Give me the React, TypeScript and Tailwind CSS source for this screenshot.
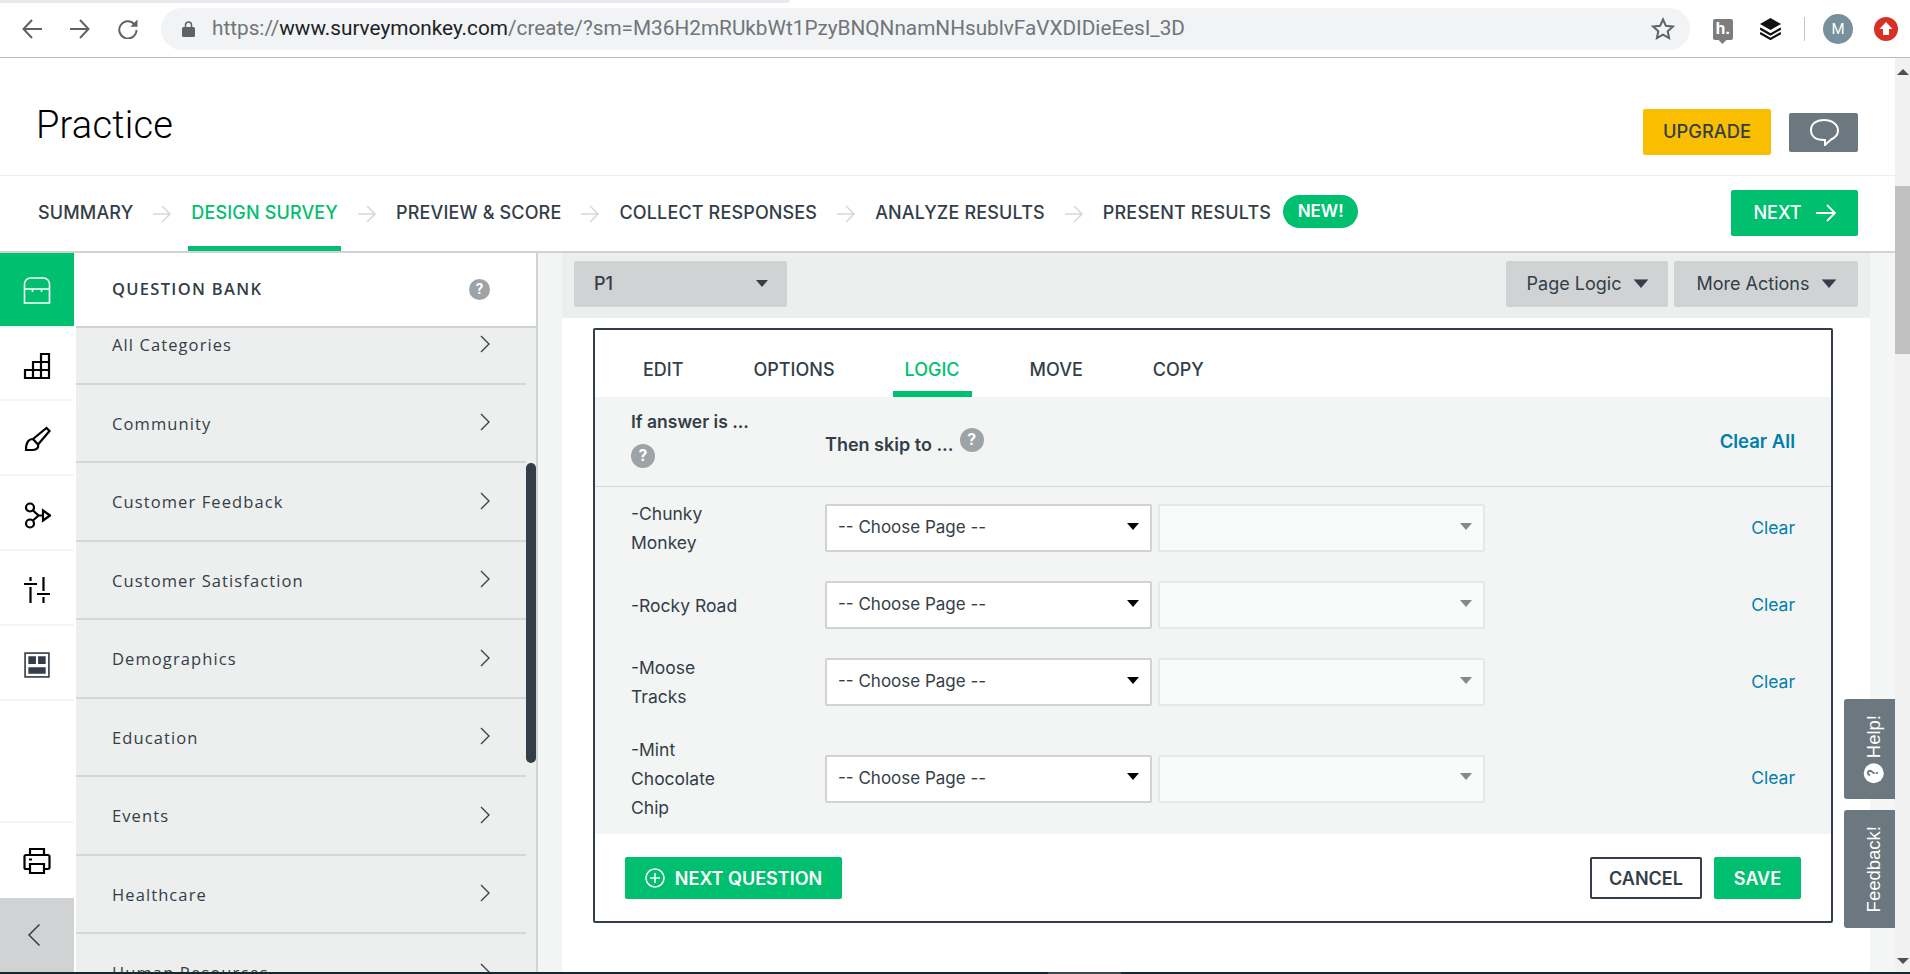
import React from 'react';

const plex = "font-['Inter',sans-serif]";
const roboto = "font-['Roboto',sans-serif]";
const wide = "font-['Open_Sans',sans-serif]";

const navItems = ['SUMMARY', 'DESIGN SURVEY', 'PREVIEW & SCORE', 'COLLECT RESPONSES', 'ANALYZE RESULTS', 'PRESENT RESULTS'];
const categories = ['All Categories', 'Community', 'Customer Feedback', 'Customer Satisfaction', 'Demographics', 'Education', 'Events', 'Healthcare', 'Human Resources'];
const tabs = ['EDIT', 'OPTIONS', 'LOGIC', 'MOVE', 'COPY'];
const answers = [['-Chunky', 'Monkey'], ['-Rocky Road'], ['-Moose', 'Tracks'], ['-Mint', 'Chocolate', 'Chip']];

const Caret = ({ className }: { className: string }) => (
  <svg width="12" height="7" viewBox="0 0 12 7" className={className}>
    <path d="M0 0h12L6 7z" fill="currentColor" />
  </svg>
);

const Question = ({ size = 'w-6 h-6 text-[17px]' }: { size?: string }) => (
  <span className={`${size} ${roboto} inline-flex shrink-0 items-center justify-center rounded-full bg-[#9da3a7] font-bold text-white`}>?</span>
);

const BrowserBar = () => (
  <div className="h-[58px] shrink-0 border-b border-[#b8b8b8] bg-white">
    <div className="h-[3px] w-[790px] rounded-br-lg bg-[#e8eaed]" />
    <div className="flex h-[54px] items-center pb-[2px] pl-[22px]">
      <svg width="20" height="20" viewBox="0 0 20 20" fill="none" stroke="#5f6368" strokeWidth="2"><path d="M20 10H1.500M10 1 1.500 10l8.500 9" /></svg>
      <svg width="20" height="20" viewBox="0 0 20 20" fill="none" stroke="#5f6368" strokeWidth="2" className="ml-7"><path d="M0 10h18.500M10 1l8.500 9-8.500 9" /></svg>
      <svg width="20" height="20" viewBox="0 0 20 20" fill="none" stroke="#5f6368" strokeWidth="2" className="ml-7"><path d="M16.600 5.500A8.600 8.600 0 1 0 18.500 11" /><path d="M19.500 0.500v7.200h-7.200z" fill="#5f6368" stroke="none" /></svg>
      <div className="ml-[23px] flex h-[42px] w-[1529px] items-center rounded-full bg-[#f1f3f4] pl-[21px]">
        <svg width="13" height="16" viewBox="0 0 13 16" fill="#5f6368"><path d="M1.500 6h10A1.500 1.500 0 0 1 13 7.500v7a1.500 1.500 0 0 1-1.500 1.500h-10A1.500 1.500 0 0 1 0 14.500v-7A1.500 1.500 0 0 1 1.500 6z" /><path d="M3.500 6V4a3 3 0 0 1 6 0v2" fill="none" stroke="#5f6368" strokeWidth="1.500" /></svg>
        <span className={`${roboto} ml-[17px] text-[20.750px] text-[#70757a]`}>
          https://<span className="text-[#202124]">www.surveymonkey.com</span>/create/?sm=M36H2mRUkbWt1PzyBNQNnamNHsublvFaVXDIDieEesI_3D
        </span>
        <svg width="24" height="24" viewBox="0 0 24 24" fill="none" stroke="#5f6368" strokeWidth="2" className="ml-auto mr-[15px]"><path d="M12 2.500l2.900 6.300 6.900.8-5.100 4.700 1.400 6.800-6.100-3.400-6.100 3.400 1.400-6.800-5.100-4.700 6.900-.8z" /></svg>
      </div>
      <div className={`${roboto} relative ml-[23px] flex h-[21px] w-[20px] items-center justify-center rounded-[2px] bg-[#7d7d7d] text-[17px] font-bold text-white`}>
        h.
        <span className="absolute -bottom-[3px] left-[7px] h-[5px] w-[5px] rotate-45 bg-[#7d7d7d]" />
      </div>
      <svg width="21" height="22" viewBox="0 0 21 22" className="ml-[27px]"><path d="M10.500 0 21 6l-10.500 6L0 6z" fill="#111" /><path d="M0 10.500l10.500 6 10.500-6M0 15l10.500 6L21 15" fill="none" stroke="#111" strokeWidth="2.200" /></svg>
      <div className="ml-[23px] h-[24px] w-px bg-[#c6c6c6]" />
      <div className={`${roboto} ml-[18px] flex h-[30px] w-[30px] items-center justify-center rounded-full bg-[#78909c] text-[15px] text-white`}>M</div>
      <svg width="24" height="24" viewBox="0 0 24 24" className="ml-[21px]"><circle cx="12" cy="12" r="12" fill="#d93025" /><path d="M12 5l6.500 7H15v6H9v-6H5.500z" fill="#fff" /></svg>
    </div>
  </div>
);

const Header = () => (
  <div className="flex h-[118px] shrink-0 items-center justify-between border-b border-[#eceeee] pt-[31px] pr-[37px] pl-[36px]">
    <h1 className={`${roboto} mb-[14px] text-[38px] leading-none font-light tracking-[0.2px] text-black`}>Practice</h1>
    <div className="flex items-center gap-[18px]">
      <button className={`${plex} h-[46px] w-[128px] rounded-[2px] bg-[#f9be00] text-[18.300px] font-medium text-[#333e48]`}>UPGRADE</button>
      <button className="flex h-[39px] w-[69px] items-center justify-center rounded-[2px] bg-[#6b787f]">
        <svg width="32" height="28" viewBox="0 0 32 28" fill="none" stroke="#fff" strokeWidth="2"><path d="M16 2c8 0 14 4.500 14 10.500 0 4.500-3.500 7.500-7 9L17 27v-5h-1C8 22 3 18.500 3 12 3 6 8 2 16 2z" /></svg>
      </button>
    </div>
  </div>
);

const NavArrow = () => (
  <svg width="20" height="18" viewBox="0 0 20 18" fill="none" stroke="#d6d8d9" strokeWidth="1.500" className="mx-[19px]"><path d="M1 9h17M10 1l8 8-8 8" /></svg>
);

const Nav = () => (
  <div className="flex h-[77px] shrink-0 items-center border-b-2 border-[#d0d2d3] pr-[37px] pl-[38px]">
    {navItems.map((item, i) => (
      <React.Fragment key={item}>
        {i > 0 && <NavArrow />}
        <a className={`${plex} relative flex h-full items-center pb-[2px] text-[18px] font-medium tracking-[0.15px] ${i === 1 ? 'text-[#00bf6f]' : 'text-[#333e48]'}`}>
          {item}
          {i === 1 && <span className="absolute -right-[3px] bottom-0 -left-[3px] h-[5px] bg-[#00bf6f]" />}
        </a>
      </React.Fragment>
    ))}
    <span className={`${plex} ml-[12px] flex h-[33px] w-[75px] -translate-y-[2px] items-center justify-center rounded-full bg-[#00bf6f] text-[17px] font-semibold text-white`}>NEW!</span>
    <button className={`${plex} ml-auto flex h-[46px] w-[127px] -translate-y-[1px] items-center justify-center gap-[14px] rounded-[2px] bg-[#00bf6f] text-[18px] font-medium text-white`}>
      NEXT
      <svg width="20" height="18" viewBox="0 0 20 18" fill="none" stroke="#fff" strokeWidth="1.800"><path d="M0 9h19M11 1l8 8-8 8" /></svg>
    </button>
  </div>
);

const RailCell = ({ children, className = '' }: { children: React.ReactNode; className?: string }) => (
  <div className={`flex h-[75px] shrink-0 items-center justify-center border-b-2 border-[#f4f5f5] ${className}`}>{children}</div>
);

const Rail = () => (
  <div className="flex w-[74px] shrink-0 flex-col bg-white">
    <div className="flex h-[73px] shrink-0 items-center justify-center bg-[#00bf6f]">
      <svg width="28" height="28" viewBox="0 0 28 28" fill="none" stroke="#fff" strokeWidth="1.600"><path d="M1.500 27V8a6 6 0 0 1 6-6h13a6 6 0 0 1 6 6v19zM1.500 13h25M9.500 13v3M18.500 13v3" /></svg>
    </div>
    <RailCell className="border-t-2">
      <svg width="28" height="28" viewBox="0 0 28 28" fill="none" stroke="#000" strokeWidth="2.200" className="translate-y-[2px]"><path d="M2 18h24v8H2zM10 10h16v16H10zM18 2h8v24h-8zM10 18v8M18 18v8" /></svg>
    </RailCell>
    <RailCell>
      <svg width="28" height="28" viewBox="0 0 28 28" fill="none" stroke="#000" strokeWidth="2.200" className="translate-y-[1px]"><path d="M10 14 23.500 3l3 3L15 19.500zM10 14c-4 0-7 3-7 11h6c4 0 7-2 6-5.500" /></svg>
    </RailCell>
    <RailCell>
      <svg width="28" height="28" viewBox="0 0 28 28" fill="none" stroke="#000" strokeWidth="2.200" className="translate-y-[2px]"><circle cx="7" cy="6.500" r="4" /><circle cx="7" cy="22.500" r="4" /><path d="M10 9.500 15.500 14.500 10 19.500M15.500 14.500H20M20 9.500l7 5-7 5z" /></svg>
    </RailCell>
    <RailCell>
      <svg width="28" height="28" viewBox="0 0 28 28" fill="none" stroke="#000" strokeWidth="2.200" className="translate-y-[2px]"><path d="M1 8h13M7.500 1v4M7.500 11v16M14 18h13M20.500 1v14M20.500 21v6" /></svg>
    </RailCell>
    <RailCell>
      <svg width="26" height="26" viewBox="0 0 24 24" fill="none" className="translate-y-[2px]"><rect x="1" y="1" width="22" height="22" stroke="#333e48" strokeWidth="1.500" /><path d="M4 4h7v7H4zM13 4h7v7h-7zM4 14h16v6H4z" fill="#333e48" /></svg>
    </RailCell>
    <div className="flex-1 border-b-2 border-[#f4f5f5]" />
    <div className="flex h-[75px] shrink-0 items-center justify-center">
      <svg width="28" height="28" viewBox="0 0 28 28" fill="none" stroke="#000" strokeWidth="2.200"><path d="M7 8V2h14v6M7 22H3a1.500 1.500 0 0 1-1.500-1.500v-11A1.500 1.500 0 0 1 3 8h22a1.500 1.500 0 0 1 1.500 1.500v11A1.500 1.500 0 0 1 25 22h-4M7 17h14v9H7zM6 12.500h3" /></svg>
    </div>
    <div className="flex h-[74px] shrink-0 items-center justify-center bg-[#d0d2d3]">
      <svg width="14" height="24" viewBox="0 0 14 24" fill="none" stroke="#333e48" strokeWidth="1.500" className="-translate-x-[3px]"><path d="M12.500 1.500 2 12l10.500 10.500" /></svg>
    </div>
  </div>
);

const Bank = () => (
  <div className="relative ml-[2px] flex w-[462px] shrink-0 flex-col border-r-2 border-[#d0d2d3]">
    <div className="relative z-10 flex h-[75px] shrink-0 items-center justify-between border-b-2 border-[#d0d2d3] bg-white pr-[46px] pl-[36px]">
      <span className={`${wide} text-[16.500px] font-semibold tracking-[1.300px] text-[#333e48]`}>QUESTION BANK</span>
      <Question size="w-[21px] h-[21px] text-[15px]" />
    </div>
    <div className="flex-1 overflow-hidden bg-[#edeeee] pr-[10px]">
      <div className="-mt-[22px]">
        {categories.map(name => (
          <div key={name} className="flex h-[78.500px] items-center justify-between border-b-2 border-[#d5d7d8] pt-[3px] pr-[36px] pl-[36px]">
            <span className={`${wide} text-[16.500px] tracking-[1.100px] text-[#333e48]`}>{name}</span>
            <svg width="10" height="18" viewBox="0 0 10 18" fill="none" stroke="#333e48" strokeWidth="1.300" className="-translate-y-[2px]"><path d="M1 1l8 8-8 8" /></svg>
          </div>
        ))}
      </div>
    </div>
    <div className="absolute top-[210px] right-0 h-[300px] w-[10px] rounded-[5px] bg-[#333e48]" />
  </div>
);

const LogicRow = ({ lines }: { lines: string[] }) => (
  <div className="flex items-center">
    <div className={`${plex} w-[194px] shrink-0 text-[17.500px] leading-[29px] text-[#333e48]`}>
      {lines.map(line => <div key={line}>{line}</div>)}
    </div>
    <div className="flex h-[48px] w-[327px] shrink-0 items-center justify-between rounded-[2px] border-2 border-[#d0d2d3] bg-white pr-[11px] pl-[11px]">
      <span className={`${plex} text-[17px] text-[#333e48]`}>-- Choose Page --</span>
      <Caret className="-translate-y-[2px] text-black" />
    </div>
    <div className="ml-[6px] flex h-[48px] w-[327px] shrink-0 items-center justify-end rounded-[2px] border-2 border-[#e6e8e8] bg-[#f9fafa] pr-[11px]">
      <Caret className="-translate-y-[2px] text-[#888]" />
    </div>
    <a className={`${plex} ml-auto text-[17.500px] text-[#007faa]`}>Clear</a>
  </div>
);

const LogicCard = () => (
  <div className="mt-[10px] ml-[31px] w-[1240px] rounded-[2px] border-2 border-[#333e48] bg-white">
    <div className="flex h-[67px] items-stretch gap-[46px] pl-[36px]">
      {tabs.map(tab => (
        <div key={tab} className={`${plex} flex items-center border-b-[6px] px-3 pt-[18px] text-[18px] font-medium ${tab === 'LOGIC' ? 'border-[#00bf6f] text-[#00bf6f]' : 'border-transparent text-[#333e48]'}`}>{tab}</div>
      ))}
    </div>
    <div className="bg-[#f3f5f5]">
      <div className={`${plex} flex h-[90px] items-center border-b border-[#d5d7d8] pr-[36px] pl-[36px] text-[17.500px] font-semibold text-[#333e48]`}>
        <div className="w-[194px] shrink-0 -translate-y-[4px]">
          <div className="leading-[29px]">If answer is ...</div>
          <div className="mt-[6px]"><Question /></div>
        </div>
        <div className="flex items-start gap-[6px]">
          <span className="translate-y-[3px] text-[18px]">Then skip to ...</span>
          <span className="-mt-[2px]"><Question /></span>
        </div>
        <a className="ml-auto text-[18.500px] font-semibold text-[#007faa]">Clear All</a>
      </div>
      <div className="flex flex-col gap-6 pt-[12px] pr-[36px] pb-[12px] pl-[36px]">
        {answers.map(lines => <LogicRow key={lines[0]} lines={lines} />)}
      </div>
    </div>
    <div className={`${plex} flex h-[87px] items-start justify-between px-[30px] pt-[23px] text-[18px] font-semibold`}>
      <button className="flex h-[42px] w-[217px] items-center justify-center gap-[10px] rounded-[2px] bg-[#00bf6f] text-white">
        <svg width="20" height="20" viewBox="0 0 20 20" fill="none" stroke="#fff" strokeWidth="1.500"><circle cx="10" cy="10" r="9" /><path d="M10 5v10M5 10h10" /></svg>
        NEXT QUESTION
      </button>
      <div className="flex gap-3">
        <button className="h-[42px] w-[112px] rounded-[2px] border-2 border-[#333e48] text-[#333e48]">CANCEL</button>
        <button className="h-[42px] w-[87px] rounded-[2px] bg-[#00bf6f] text-white">SAVE</button>
      </div>
    </div>
  </div>
);

const Toolbar = () => (
  <div className={`${plex} flex h-[65px] items-center justify-between bg-[#edeeee] pr-[12px] pb-[4px] pl-[12px] text-[18px] text-[#333e48]`}>
    <div className="flex h-[46px] w-[213px] items-center justify-between rounded-[2px] bg-[#d0d2d3] pr-[19px] pl-[20px] font-medium">
      P1
      <Caret className="text-[#333e48]" />
    </div>
    <div className="flex gap-[6px]">
      <div className="flex h-[46px] w-[162px] items-center justify-center gap-[14px] rounded-[2px] bg-[#d0d2d3]">
        Page Logic
        <Caret className="scale-125 text-[#333e48]" />
      </div>
      <div className="flex h-[46px] w-[184px] items-center justify-center gap-[14px] rounded-[2px] bg-[#d0d2d3]">
        More Actions
        <Caret className="scale-125 text-[#333e48]" />
      </div>
    </div>
  </div>
);

const SideTabs = () => (
  <div className="absolute top-[641px] right-0 flex w-[51px] flex-col gap-[11px] font-['Liberation_Sans',sans-serif] text-[18.500px] text-white">
    <div className="flex h-[100px] items-center justify-center rounded-l-[3px] bg-[#6b787f] pl-[8px]">
      <div className="flex rotate-180 items-center gap-[5px] [writing-mode:vertical-rl]">
        <span className={`${roboto} flex h-5 w-5 items-center justify-center rounded-full bg-white text-[14px] font-bold text-[#6b787f]`}>?</span>
        <span>Help!</span>
      </div>
    </div>
    <div className="flex h-[118px] items-center justify-center rounded-l-[3px] bg-[#6b787f] pl-[8px]">
      <span className="rotate-180 [writing-mode:vertical-rl]">Feedback!</span>
    </div>
  </div>
);

const PageScrollbar = () => (
  <div className="relative flex w-[15px] shrink-0 flex-col bg-[#f1f1f1]">
    <div className="mx-auto mt-[11px] h-0 w-0 border-x-[6px] border-b-[6px] border-x-transparent border-b-[#505050]" />
    <div className="mt-[111px] h-[168px] bg-[#c1c1c1]" />
    <div className="mx-auto mt-auto mb-[8px] h-0 w-0 border-x-[6px] border-t-[6px] border-x-transparent border-t-[#505050]" />
  </div>
);

export default function App() {
  return (
    <div className="relative flex h-[974px] w-[1910px] flex-col overflow-hidden bg-white">
      <BrowserBar />
      <div className="flex min-h-0 flex-1">
        <div className="relative flex min-w-0 flex-1 flex-col">
          <Header />
          <Nav />
          <div className="flex min-h-0 flex-1">
            <Rail />
            <Bank />
            <div className="w-[24px] shrink-0 bg-[#f3f4f4]" />
            <div className="w-[1308px] shrink-0 bg-white">
              <Toolbar />
              <LogicCard />
            </div>
            <div className="flex-1 bg-[#f4f5f5]" />
          </div>
          <SideTabs />
        </div>
        <PageScrollbar />
      </div>
      <div className="flex h-[2px] shrink-0 bg-[#14282d]">
        <div className="ml-[1048px] w-[73px] bg-[#3c4a4e]" />
      </div>
    </div>
  );
}
